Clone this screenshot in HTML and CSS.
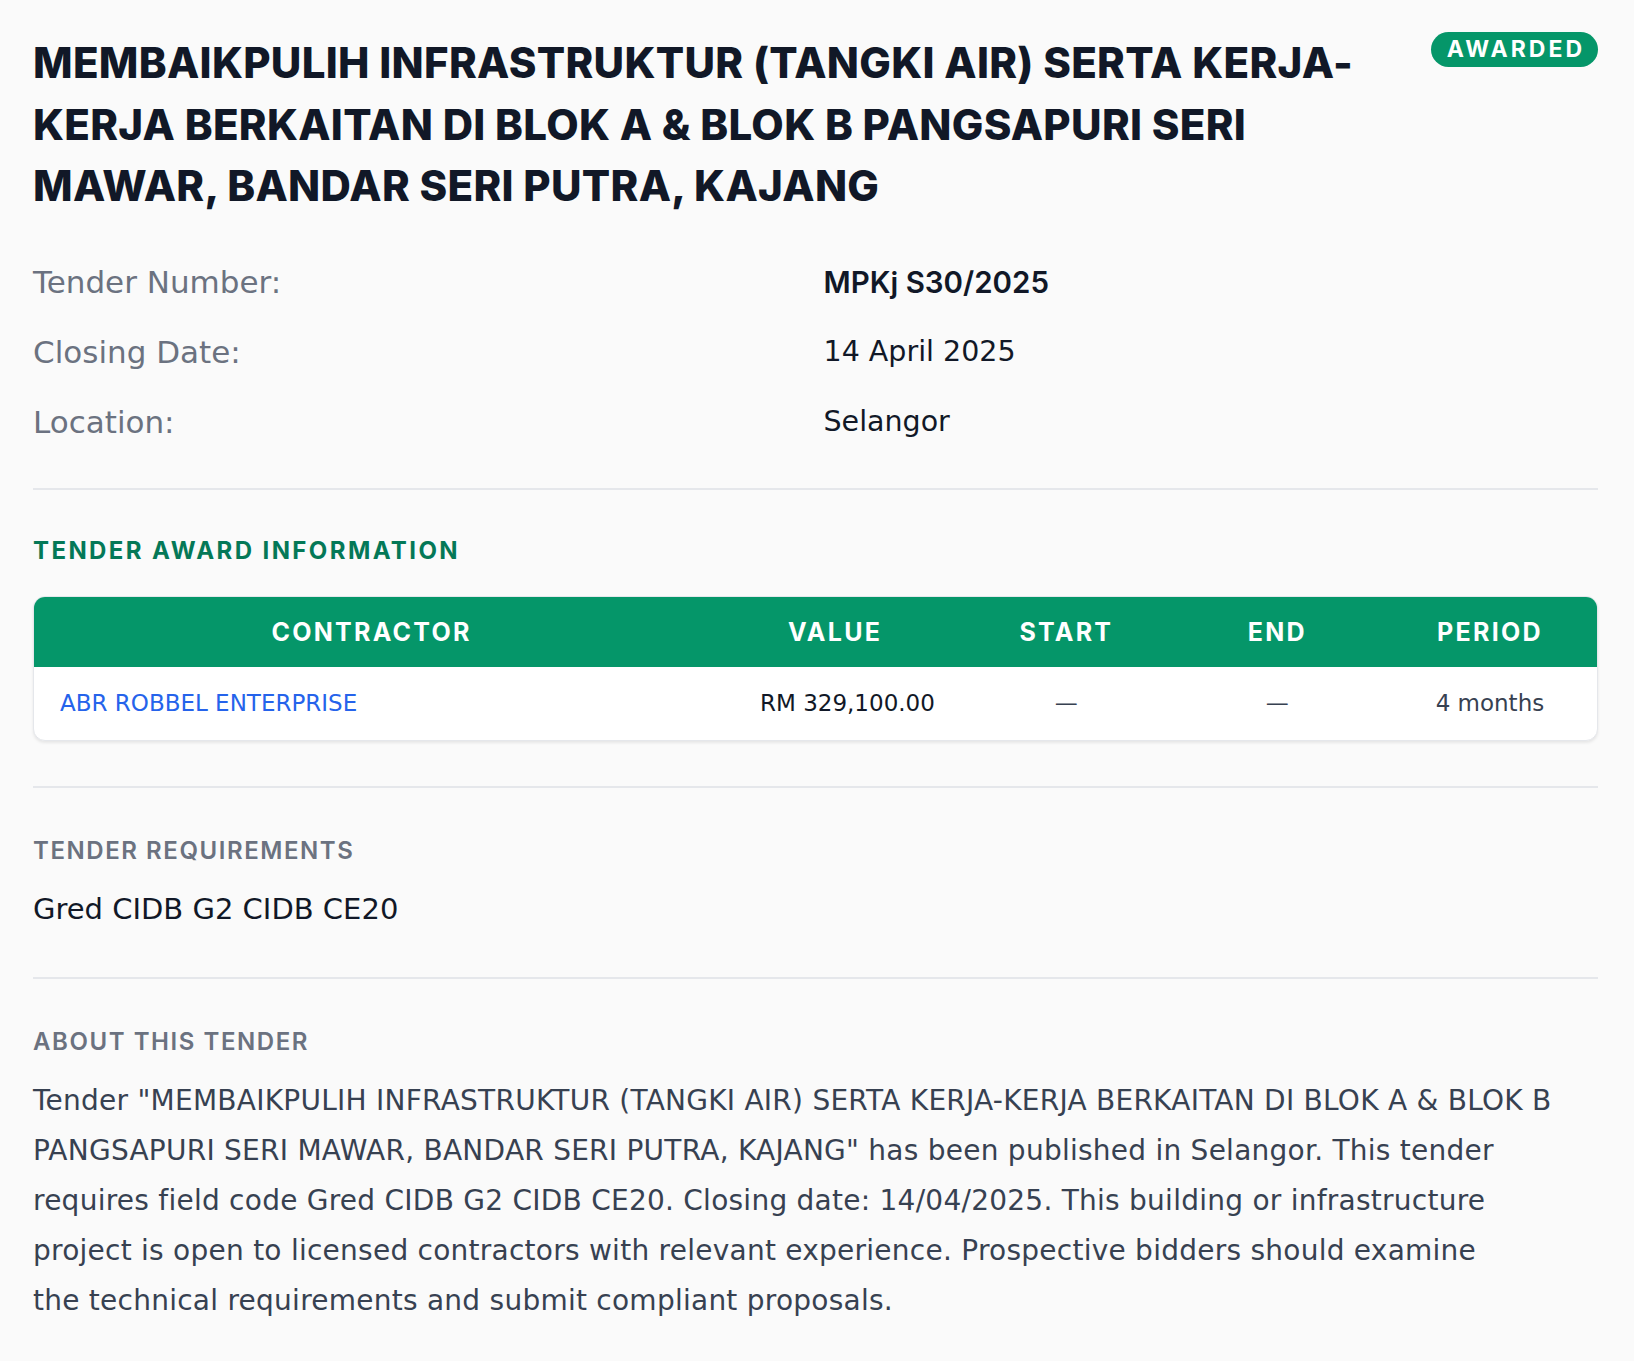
FILE: index.html
```html
<!DOCTYPE html>
<html lang="en">
<head>
  <meta charset="UTF-8" />
  <title>Tender MPKj S30/2025</title>
  <meta name="viewport" content="width=device-width, initial-scale=1" />
  <link rel="stylesheet" href="styles.css">
</head>
<body>
  <div class="tender">
    <div class="tender-head">
      <h1>MEMBAIKPULIH INFRASTRUKTUR (TANGKI AIR) SERTA KERJA-KERJA BERKAITAN DI BLOK A &amp; BLOK B PANGSAPURI SERI MAWAR, BANDAR SERI PUTRA, KAJANG</h1>
      <span class="badge">AWARDED</span>
    </div>

    <dl class="facts">
      <dt>Tender Number:</dt>
      <dd class="strong">MPKj S30/2025</dd>
      <dt>Closing Date:</dt>
      <dd>14 April 2025</dd>
      <dt>Location:</dt>
      <dd>Selangor</dd>
    </dl>

    <section class="block">
      <h2 class="green">Tender Award Information</h2>
      <div class="award-wrap">
        <table class="award">
          <colgroup>
            <col class="c-contractor">
            <col class="c-value">
            <col class="c-date">
            <col class="c-date">
            <col class="c-period">
          </colgroup>
          <thead>
            <tr>
              <th>Contractor</th>
              <th>Value</th>
              <th>Start</th>
              <th>End</th>
              <th>Period</th>
            </tr>
          </thead>
          <tbody>
            <tr>
              <td class="contractor"><a href="#">ABR ROBBEL ENTERPRISE</a></td>
              <td class="num">RM 329,100.00</td>
              <td class="mid">&mdash;</td>
              <td class="mid">&mdash;</td>
              <td class="mid">4 months</td>
            </tr>
          </tbody>
        </table>
      </div>
    </section>

    <section class="block">
      <h2>Tender Requirements</h2>
      <p class="req">Gred CIDB G2 CIDB CE20</p>
    </section>

    <section class="block">
      <h2>About This Tender</h2>
      <p class="about">Tender "MEMBAIKPULIH INFRASTRUKTUR (TANGKI AIR) SERTA KERJA-KERJA BERKAITAN DI BLOK A &amp; BLOK B<br>
        PANGSAPURI SERI MAWAR, BANDAR SERI PUTRA, KAJANG" has been published in Selangor. This tender<br>
        requires field code Gred CIDB G2 CIDB CE20. Closing date: 14/04/2025. This building or infrastructure<br>
        project is open to licensed contractors with relevant experience. Prospective bidders should examine<br>
        the technical requirements and submit compliant proposals.</p>
    </section>
  </div>
</body>
</html>
```

FILE: styles.css
```css
body {
  font-family: 'DejaVu Sans', sans-serif;
  background: #fafafa;
  color: #111827;
  margin: 0;
  padding: 0;
}

.tender {
  padding: 32px 36px 20px 33px;
}

.tender-head {
  display: flex;
  justify-content: space-between;
  align-items: flex-start;
  gap: 40px;
}

h1 {
  margin: 0;
  font-family: Inter, sans-serif;
  font-size: 42px;
  line-height: 61.5px;
  font-weight: 800;
  letter-spacing: 0.3px;
  color: #111827;
  max-width: 1350px;
}

.badge {
  flex-shrink: 0;
  padding: 0 13px 0 16px;
  height: 35px;
  line-height: 35px;
  border-radius: 999px;
  background: #059669;
  color: white;
  font-family: Inter, sans-serif;
  font-size: 23px;
  font-weight: 700;
  letter-spacing: 3px;
}

.facts {
  display: grid;
  grid-template-columns: 1fr 1fr;
  column-gap: 16px;
  row-gap: 28px;
  margin: 44px 0 0;
  padding-bottom: 45px;
  border-bottom: 2px solid #e5e7eb;
}

.facts dt,
.facts dd {
  margin: 0;
  line-height: 42px;
}

.facts dt {
  font-size: 31px;
  color: #6b7280;
}

.facts dd {
  font-size: 28.5px;
  color: #111827;
}

.facts dd.strong {
  font-family: Inter, sans-serif;
  font-size: 29.5px;
  font-weight: 600;
}

.block {
  padding: 45px 0 47px;
  border-bottom: 2px solid #e5e7eb;
}

.block:first-of-type {
  padding: 43px 0 45px;
}

.block:last-child {
  border-bottom: none;
}

h2 {
  margin: 0;
  font-family: Inter, sans-serif;
  font-size: 24px;
  line-height: 36px;
  font-weight: 600;
  letter-spacing: 0.065em;
  text-transform: uppercase;
  color: #6b7280;
}

h2.green {
  color: #047857;
  font-weight: 700;
  letter-spacing: 0.1em;
}

.award-wrap {
  margin-top: 27px;
  background: white;
  border: 1px solid #e5e7eb;
  border-radius: 12px;
  overflow: hidden;
  box-shadow: 0 2px 3px rgba(0,0,0,0.08);
}

.award {
  width: 100%;
  border-collapse: collapse;
  table-layout: fixed;
}

.c-contractor { width: 43.2%; }
.c-value { width: 16.1%; }
.c-date { width: 13.5%; }

.award th {
  background: #059669;
  color: white;
  height: 70px;
  padding: 0 26px;
  font-family: Inter, sans-serif;
  font-size: 25px;
  font-weight: 700;
  letter-spacing: 0.09em;
  text-transform: uppercase;
  text-align: center;
}

.award td {
  height: 73px;
  padding: 0 26px;
  font-size: 23px;
  color: #111827;
  text-align: center;
}

.award td.contractor {
  text-align: left;
}

.award td.contractor a {
  color: #2563eb;
  text-decoration: none;
}

.award td.num {
  text-align: right;
}

.award td.mid {
  color: #374151;
}

.req {
  margin: 19px 0 0;
  font-size: 29px;
  line-height: 42px;
  color: #111827;
}

.about {
  margin: 16px 0 0;
  font-size: 28px;
  line-height: 50px;
  letter-spacing: 0.25px;
  color: #374151;
}
```
